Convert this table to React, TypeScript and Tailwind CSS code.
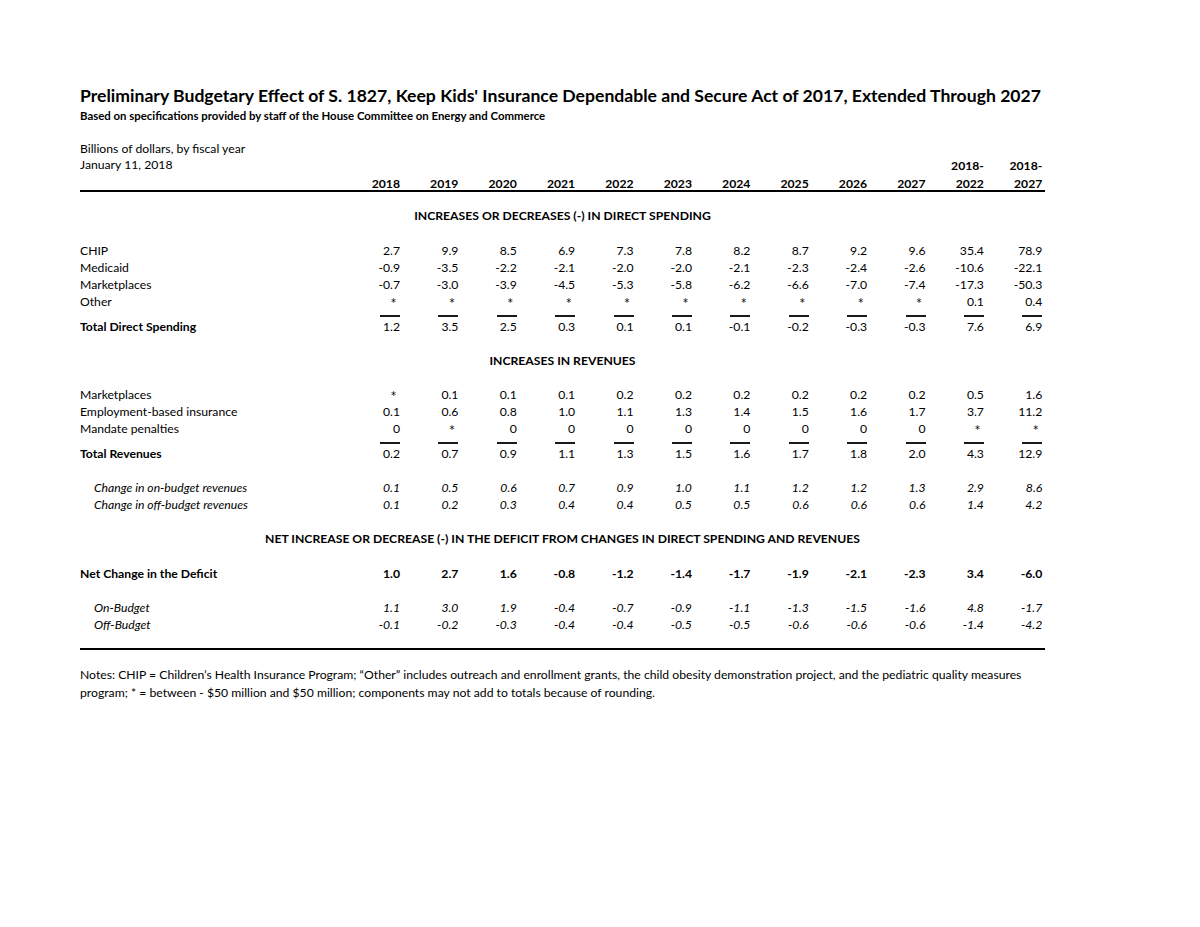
import React from "react";

const COLS = "grid grid-cols-[248px_75px_repeat(11,58.4px)]";

type RowProps = {
  label: string;
  values: string[];
  bold?: boolean;
  boldValues?: boolean;
  italic?: boolean;
};

const Star = () => (
  <span className="pr-[4px] font-['DejaVu_Sans',sans-serif] text-[10px] not-italic">*</span>
);

const Cell = ({ v, bold }: { v: string; bold?: boolean }) => (
  <div className={`text-right pr-[3px] ${bold ? "font-bold" : ""}`}>{v === "*" ? <Star /> : v}</div>
);

const Row = ({ label, values, bold, boldValues, italic }: RowProps) => (
  <div className={`${COLS} h-[17px] leading-[17px] ${italic ? "italic" : ""}`}>
    <div className={`${bold ? "font-bold" : ""} ${italic ? "pl-[14px]" : ""}`}>{label}</div>
    {values.map((v, i) => (
      <Cell key={i} v={v} bold={boldValues} />
    ))}
  </div>
);

// short overlines above the totals
const Rules = () => (
  <div className={`${COLS} h-[8px]`}>
    <div />
    {Array.from({ length: 12 }).map((_, i) => (
      <div key={i} className="pr-[3px] pt-[5px]">
        <div className="ml-auto w-[20px] border-t-2 border-[#1a1a1a]" />
      </div>
    ))}
  </div>
);

const Heading = ({ children }: { children: React.ReactNode }) => (
  <div className="h-[17px] leading-[17px] text-center font-bold">{children}</div>
);

const Blank = ({ h = "h-[17px]" }: { h?: string }) => <div className={h} />;

const years = ["2018", "2019", "2020", "2021", "2022", "2023", "2024", "2025", "2026", "2027"];

const RangeHead = ({ end }: { end: string }) => (
  <div className="flex flex-col justify-end text-right pr-[3px] font-bold">
    <div className="leading-[17px] pb-[3px]">2018-</div>
    <div className="leading-[13px]">{end}</div>
  </div>
);

export default function App() {
  return (
    <div className="min-h-screen bg-white text-black font-['Lato','Noto_Sans',sans-serif]">
      <div className="pl-[80px] pt-[84px] w-[1045px]">
        <h1 className="text-[17.6px] font-bold leading-[24px] whitespace-nowrap">
          Preliminary Budgetary Effect of S. 1827, Keep Kids' Insurance Dependable and Secure Act of 2017, Extended Through 2027
        </h1>
        <p className="text-[11.4px] font-bold leading-[15px]">
          Based on specifications provided by staff of the House Committee on Energy and Commerce
        </p>

        <div className="text-[12.2px] mt-[18px]">
          <div className={`${COLS} h-[51px] border-b-2 border-black`}>
            <div className="leading-[16px]">
              <div>Billions of dollars, by fiscal year</div>
              <div>January 11, 2018</div>
            </div>
            {years.map((y) => (
              <div key={y} className="flex flex-col justify-end text-right pr-[3px] font-bold leading-[13px]">
                {y}
              </div>
            ))}
            <RangeHead end="2022" />
            <RangeHead end="2027" />
          </div>

          <div className="pt-[15px]">
            <Heading>INCREASES OR DECREASES (-) IN DIRECT SPENDING</Heading>
            <Blank h="h-[18px]" />
            <Row label="CHIP" values={["2.7", "9.9", "8.5", "6.9", "7.3", "7.8", "8.2", "8.7", "9.2", "9.6", "35.4", "78.9"]} />
            <Row label="Medicaid" values={["-0.9", "-3.5", "-2.2", "-2.1", "-2.0", "-2.0", "-2.1", "-2.3", "-2.4", "-2.6", "-10.6", "-22.1"]} />
            <Row label="Marketplaces" values={["-0.7", "-3.0", "-3.9", "-4.5", "-5.3", "-5.8", "-6.2", "-6.6", "-7.0", "-7.4", "-17.3", "-50.3"]} />
            <Row label="Other" values={["*", "*", "*", "*", "*", "*", "*", "*", "*", "*", "0.1", "0.4"]} />
            <Rules />
            <Row bold label="Total Direct Spending" values={["1.2", "3.5", "2.5", "0.3", "0.1", "0.1", "-0.1", "-0.2", "-0.3", "-0.3", "7.6", "6.9"]} />
            <Blank />

            <Heading>INCREASES IN REVENUES</Heading>
            <Blank />
            <Row label="Marketplaces" values={["*", "0.1", "0.1", "0.1", "0.2", "0.2", "0.2", "0.2", "0.2", "0.2", "0.5", "1.6"]} />
            <Row label="Employment-based insurance" values={["0.1", "0.6", "0.8", "1.0", "1.1", "1.3", "1.4", "1.5", "1.6", "1.7", "3.7", "11.2"]} />
            <Row label="Mandate penalties" values={["0", "*", "0", "0", "0", "0", "0", "0", "0", "0", "*", "*"]} />
            <Rules />
            <Row bold label="Total Revenues" values={["0.2", "0.7", "0.9", "1.1", "1.3", "1.5", "1.6", "1.7", "1.8", "2.0", "4.3", "12.9"]} />
            <Blank />
            <Row italic label="Change in on-budget revenues" values={["0.1", "0.5", "0.6", "0.7", "0.9", "1.0", "1.1", "1.2", "1.2", "1.3", "2.9", "8.6"]} />
            <Row italic label="Change in off-budget revenues" values={["0.1", "0.2", "0.3", "0.4", "0.4", "0.5", "0.5", "0.6", "0.6", "0.6", "1.4", "4.2"]} />
            <Blank />

            <Heading>NET INCREASE OR DECREASE (-) IN THE DEFICIT FROM CHANGES IN DIRECT SPENDING AND REVENUES</Heading>
            <Blank h="h-[18px]" />
            <Row bold boldValues label="Net Change in the Deficit" values={["1.0", "2.7", "1.6", "-0.8", "-1.2", "-1.4", "-1.7", "-1.9", "-2.1", "-2.3", "3.4", "-6.0"]} />
            <Blank />
            <Row italic label="On-Budget" values={["1.1", "3.0", "1.9", "-0.4", "-0.7", "-0.9", "-1.1", "-1.3", "-1.5", "-1.6", "4.8", "-1.7"]} />
            <Row italic label="Off-Budget" values={["-0.1", "-0.2", "-0.3", "-0.4", "-0.4", "-0.5", "-0.5", "-0.6", "-0.6", "-0.6", "-1.4", "-4.2"]} />
          </div>

          <div className="mt-[15px] w-[965px] border-t-2 border-black" />
          <p className="mt-[16px] w-[965px] leading-[18px]">
            Notes: CHIP = Children’s Health Insurance Program; “Other” includes outreach and enrollment grants, the child obesity demonstration project, and the pediatric quality measures program; * = between - $50 million and $50 million; components may not add to totals because of rounding.
          </p>
        </div>
      </div>
    </div>
  );
}
